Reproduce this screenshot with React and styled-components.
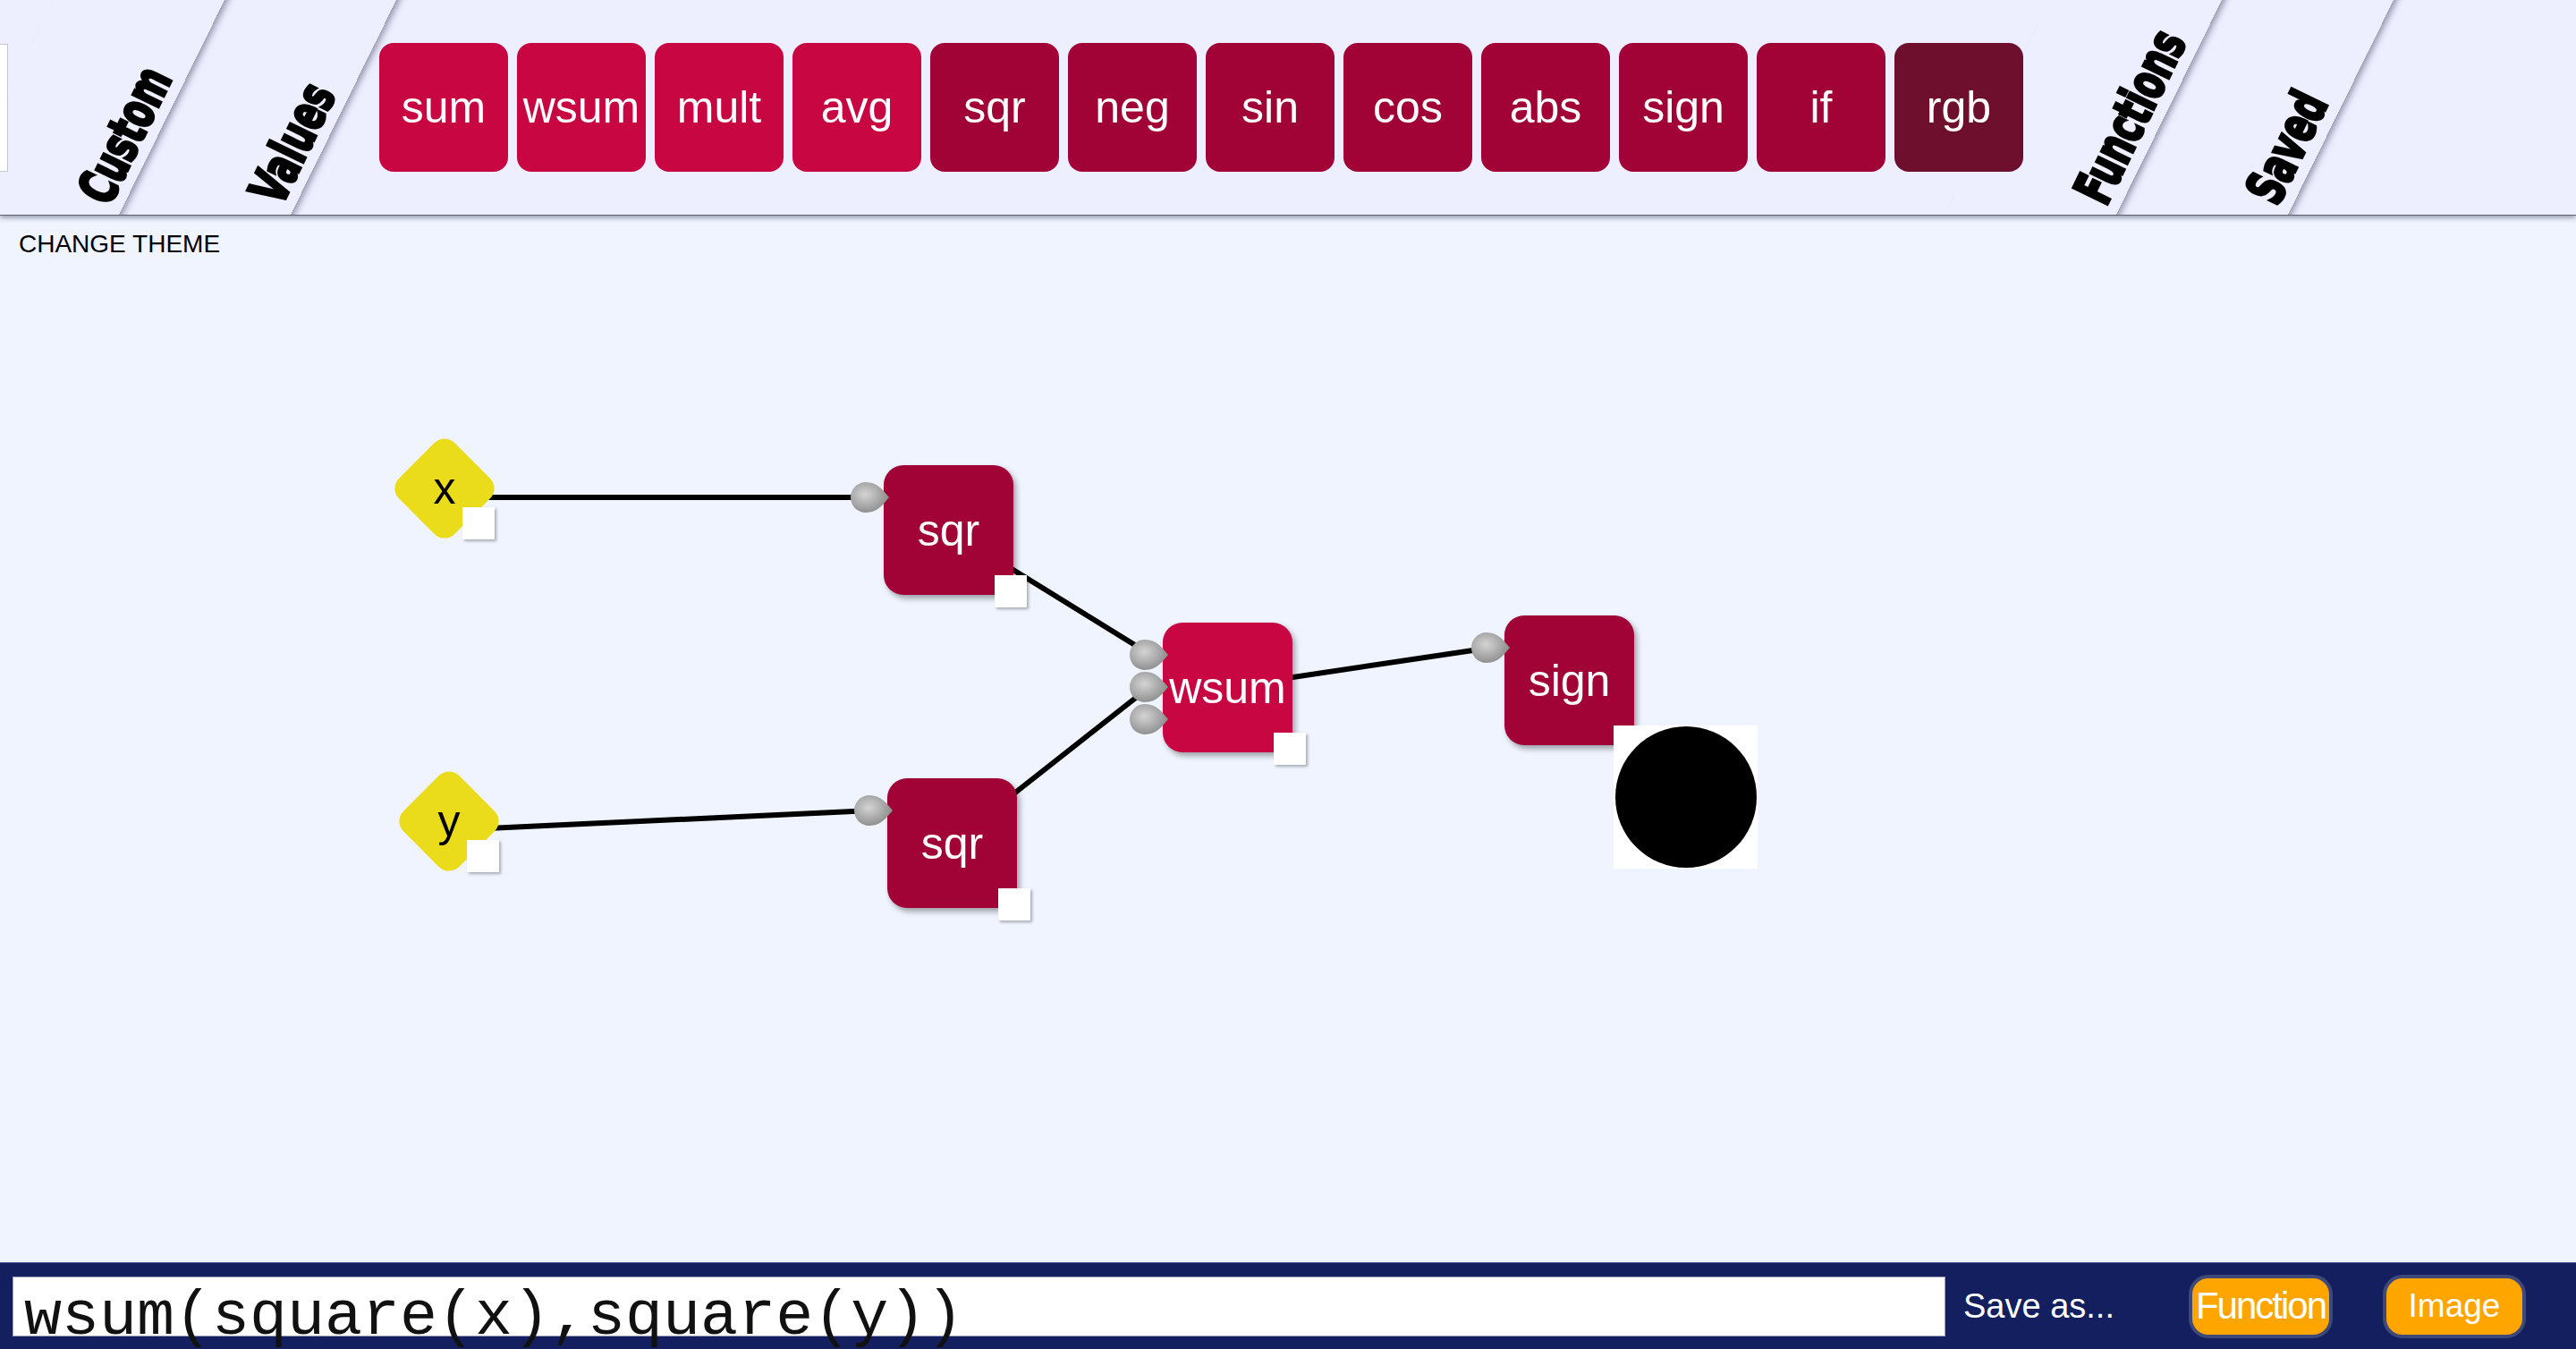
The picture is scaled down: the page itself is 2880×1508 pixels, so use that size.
import React from 'react';
import styled, { createGlobalStyle } from 'styled-components';

const GlobalStyle = createGlobalStyle`
  html, body {
    margin: 0;
    padding: 0;
  }
  body {
    background: #eff4fe;
    font-family: "Liberation Sans", Arial, sans-serif;
    overflow: hidden;
  }
`;

const CRIMSON = '#c70642';
const WINE = '#a10336';
const PLUM = '#6f0f2e';

const palette = [
  { name: 'sum', tone: CRIMSON },
  { name: 'wsum', tone: CRIMSON },
  { name: 'mult', tone: CRIMSON },
  { name: 'avg', tone: CRIMSON },
  { name: 'sqr', tone: WINE },
  { name: 'neg', tone: WINE },
  { name: 'sin', tone: WINE },
  { name: 'cos', tone: WINE },
  { name: 'abs', tone: WINE },
  { name: 'sign', tone: WINE },
  { name: 'if', tone: WINE },
  { name: 'rgb', tone: PLUM },
];

// canvas coordinates (board starts right under the toolbar)
const variables = [
  { id: 'x', cx: 497, cy: 306 },
  { id: 'y', cx: 502, cy: 678 },
];

const functions = [
  { id: 'sqr1', label: 'sqr', x: 988, y: 280, tone: WINE, inputs: 1 },
  { id: 'sqr2', label: 'sqr', x: 992, y: 630, tone: WINE, inputs: 1 },
  { id: 'wsum', label: 'wsum', x: 1300, y: 456, tone: CRIMSON, inputs: 3 },
  { id: 'sign', label: 'sign', x: 1682, y: 448, tone: WINE, inputs: 1, preview: true },
];

const wires = [
  [497, 316, 960, 316],
  [502, 688, 975, 666],
  [1060, 352, 1285, 491],
  [1064, 702, 1285, 528],
  [1372, 528, 1667, 484],
];

const Page = styled.div`
  display: flex;
  flex-direction: column;
  width: 2880px;
  height: 1508px;
`;

const Toolbar = styled.header`
  display: flex;
  align-items: stretch;
  flex: 0 0 240px;
  background: #edeffe;
  overflow: hidden;
  box-shadow: 0 1px 0 #5d606c, 0 3px 6px rgba(40, 44, 70, 0.5);
`;

const Stub = styled.div`
  flex: 0 0 9px;
  align-self: center;
  height: 143px;
  margin-right: -9px;
  box-sizing: border-box;
  background: #fff;
  border: 1px solid #c4c6d2;
  border-left: none;
`;

const Tab = styled.div`
  position: relative;
  flex: 0 0 192px;
  min-width: 0;
  margin-left: ${(p) => p.$pull || 0}px;
  box-sizing: border-box;
  display: flex;
  align-items: flex-end;
  padding: 0 0 ${(p) => p.$pb || 4}px ${(p) => p.$pl || 124}px;

  &::before {
    content: '';
    position: absolute;
    top: -10px;
    bottom: -10px;
    left: 0;
    right: 0;
    transform: skewX(-26.2deg);
    box-shadow: 4px 0 7px rgba(60, 62, 95, 0.5);
    clip-path: inset(0 -30px 0 0);
  }
`;

const TabLabel = styled.span`
  flex: none;
  font-family: "DejaVu Sans Condensed", "Liberation Sans Narrow", "DejaVu Sans", sans-serif;
  font-stretch: condensed;
  font-weight: 900;
  font-size: 42px;
  line-height: 1;
  white-space: nowrap;
  color: #000;
  -webkit-text-stroke: 2.5px #000;
  transform-origin: 0 100%;
  transform: rotate(-64deg) scaleY(1.38);
`;

const Palette = styled.div`
  display: flex;
  align-items: center;
  gap: 10px;
  margin-left: 40px;
`;

const PaletteButton = styled.div`
  flex: 0 0 144px;
  height: 144px;
  border-radius: 16px;
  background: ${(p) => p.$tone};
  color: #fff;
  font-size: 50px;
  display: flex;
  align-items: center;
  justify-content: center;
`;

const Board = styled.main`
  position: relative;
  flex: 1;
`;

const ThemeSwitch = styled.div`
  padding: 17px 0 0 21px;
  font-size: 28px;
  color: #000;
`;

const Wires = styled.svg`
  position: absolute;
  left: 0;
  top: 0;
  width: 100%;
  height: 100%;
`;

const VarNode = styled.div`
  position: absolute;
  z-index: 0;
  left: ${(p) => p.$cx - 56}px;
  top: ${(p) => p.$cy - 56}px;
  width: 112px;
  height: 112px;
  display: flex;
  align-items: center;
  justify-content: center;
  font-size: 50px;
  color: #000;

  &::before {
    content: '';
    position: absolute;
    left: 12px;
    top: 12px;
    width: 88px;
    height: 88px;
    border-radius: 16px;
    background: #ebdc1b;
    transform: rotate(45deg);
    z-index: -1;
  }
`;

const FnNode = styled.div`
  position: absolute;
  left: ${(p) => p.$x}px;
  top: ${(p) => p.$y}px;
  width: 145px;
  height: 145px;
  border-radius: 22px;
  background: ${(p) => p.$tone};
  box-shadow: 3px 4px 6px rgba(0, 0, 0, 0.35);
  display: flex;
  align-items: center;
  justify-content: center;
  color: #fff;
  font-size: 50px;
`;

const Port = styled.div`
  position: absolute;
  left: ${(p) => p.$x}px;
  top: ${(p) => p.$y}px;
  width: 36px;
  height: 36px;
  background: #fff;
  box-shadow: 2px 2px 3px rgba(0, 0, 0, 0.3);
`;

const Socket = styled.svg`
  position: absolute;
  left: ${(p) => p.$x}px;
  top: ${(p) => p.$y}px;
  width: 44px;
  height: 36px;
`;

const Preview = styled.svg`
  position: absolute;
  left: ${(p) => p.$x}px;
  top: ${(p) => p.$y}px;
  width: 161px;
  height: 160px;
  background: #fff;
`;

const Footer = styled.footer`
  flex: 0 0 97px;
  box-sizing: border-box;
  background: #131f5e;
  border-top: 1px solid #4a5490;
  display: flex;
  align-items: center;
  padding: 0 56px 0 14px;
`;

const Expression = styled.div`
  flex: 0 0 2161px;
  height: 67px;
  box-sizing: border-box;
  background: #fff;
  border: 1px solid #9aa0b8;
  padding: 10px 12px 0;
  font-family: "Liberation Mono", "Courier New", monospace;
  font-size: 70px;
  line-height: 1;
  color: #111;
  white-space: nowrap;
  overflow: visible;
`;

const SaveLabel = styled.span`
  margin-left: 20px;
  color: #fff;
  font-size: 38px;
`;

const ActionButton = styled.div`
  flex: 0 0 ${(p) => p.$w}px;
  height: 71px;
  margin-left: ${(p) => p.$ml};
  box-sizing: border-box;
  border: 4px solid #3e4879;
  border-radius: 22px;
  background: #ffa500;
  color: #fff;
  font-size: ${(p) => p.$fs}px;
  letter-spacing: ${(p) => p.$ls || 0}px;
  display: flex;
  align-items: center;
  justify-content: center;
  white-space: nowrap;
`;

function SocketShape({ x, y, gid }) {
  return (
    <Socket $x={x} $y={y} viewBox="0 0 44 36">
      <defs>
        <radialGradient id={gid} cx="38%" cy="40%" r="65%">
          <stop offset="0" stopColor="#d4d4d4" />
          <stop offset="1" stopColor="#8a8a8a" />
        </radialGradient>
      </defs>
      <path
        d="M44 18 C37 10 31 1 18 1 C8 1 1 9 1 18 C1 27 8 35 18 35 C31 35 37 26 44 18 Z"
        fill={`url(#${gid})`}
      />
    </Socket>
  );
}

function App() {
  return (
    <Page>
      <GlobalStyle />
      <Toolbar>
        <Stub />
        <Tab $pl={131}>
          <TabLabel>Custom</TabLabel>
        </Tab>
        <Tab $pl={131}>
          <TabLabel>Values</TabLabel>
        </Tab>
        <Palette>
          {palette.map((b) => (
            <PaletteButton key={b.name} $tone={b.tone}>
              {b.name}
            </PaletteButton>
          ))}
        </Palette>
        <Tab $pull={-29.5} $pl={130}>
          <TabLabel>Functions</TabLabel>
        </Tab>
        <Tab $pl={130}>
          <TabLabel>Saved</TabLabel>
        </Tab>
      </Toolbar>

      <Board>
        <ThemeSwitch>CHANGE THEME</ThemeSwitch>
        <Wires>
          {wires.map(([x1, y1, x2, y2], i) => (
            <line key={i} x1={x1} y1={y1} x2={x2} y2={y2} stroke="#000" strokeWidth="6" />
          ))}
        </Wires>

        {variables.map((v) => (
          <React.Fragment key={v.id}>
            <VarNode $cx={v.cx} $cy={v.cy}>{v.id}</VarNode>
            <Port $x={v.cx + 20} $y={v.cy + 21} />
          </React.Fragment>
        ))}

        {functions.map((f) => (
          <React.Fragment key={f.id}>
            <FnNode $x={f.x} $y={f.y} $tone={f.tone}>{f.label}</FnNode>
            {Array.from({ length: f.inputs }).map((_, i) => (
              <SocketShape key={i} gid={`sock-${f.id}-${i}`} x={f.x - 38} y={f.y + 18 + 36 * i} />
            ))}
            {f.preview ? (
              <Preview $x={f.x + 122} $y={f.y + 123} viewBox="0 0 161 160">
                <ellipse cx="81" cy="80" rx="79" ry="79" fill="#000" />
              </Preview>
            ) : (
              <Port $x={f.x + 124} $y={f.y + 123} />
            )}
          </React.Fragment>
        ))}
      </Board>

      <Footer>
        <Expression>wsum(square(x),square(y))</Expression>
        <SaveLabel>Save as...</SaveLabel>
        <ActionButton $w={161} $ml="auto" $fs={42} $ls={-2}>Function</ActionButton>
        <ActionButton $w={160} $ml="56px" $fs={37}>Image</ActionButton>
      </Footer>
    </Page>
  );
}

export default App;
